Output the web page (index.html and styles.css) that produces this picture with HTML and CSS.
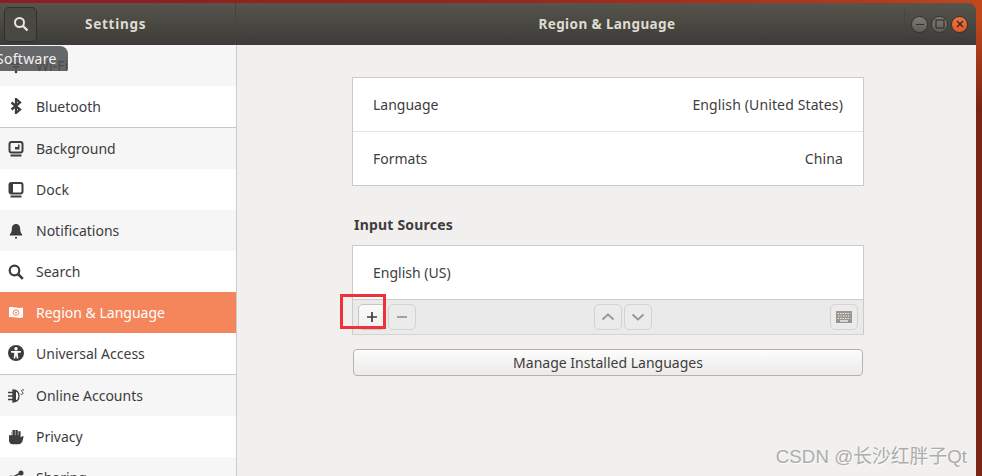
FILE: index.html
```html
<!DOCTYPE html>
<html>
<head>
  <meta charset="utf-8">
  <meta name="viewport" content="width=device-width, initial-scale=1">
  <title>Region &amp; Language</title>
  <link rel="stylesheet" href="styles.css">
</head>
<body>
  <div class="desktop">
    <div class="window">
      <header class="titlebar">
        <div class="titlebar-left">
          <button class="search-btn">
            <svg width="16" height="16" viewBox="0 0 16 16"><circle cx="6.5" cy="6.5" r="4.5" fill="none" stroke="#e8e6e0" stroke-width="2"/><path d="M10 10l4.5 4.5" stroke="#e8e6e0" stroke-width="2.4"/></svg>
          </button>
          <span class="app-title">Settings</span>
        </div>
        <div class="titlebar-main">
          <span class="page-title">Region &amp; Language</span>
          <div class="window-controls">
            <span class="win-btn"><svg width="10" height="10" viewBox="0 0 10 10"><path d="M1 5.5h8" stroke="#33322d" stroke-width="1.2"/></svg></span>
            <span class="win-btn"><svg width="10" height="10" viewBox="0 0 10 10"><rect x="1" y="1" width="8" height="8" fill="none" stroke="#33322d" stroke-width="1.2"/></svg></span>
            <span class="win-btn close"><svg width="10" height="10" viewBox="0 0 10 10"><path d="M2 2l6 6M8 2l-6 6" stroke="#33261f" stroke-width="1.4"/></svg></span>
          </div>
        </div>
      </header>
      <div class="content">
        <nav class="sidebar">
          <div class="nav-row alt">
            <svg class="nav-icon" viewBox="0 0 16 16"><path d="M3 6h10M5 9h6M7 11.500h2" stroke="#3d3d3d" stroke-width="1.600"/><circle cx="8" cy="14" r="1.300" fill="#3d3d3d"/></svg>
            <span>Wi-Fi</span>
          </div>
          <div class="nav-row section-end">
            <svg class="nav-icon" viewBox="0 0 16 16"><path d="M3.500 4.500l8.500 7L8 15V1l4 3.500-8.500 7" fill="none" stroke="#3d3d3d" stroke-width="2.300"/></svg>
            <span>Bluetooth</span>
          </div>
          <div class="nav-row alt">
            <svg class="nav-icon" viewBox="0 0 16 16"><rect x="1.500" y="1" width="13" height="10.500" rx="2" fill="none" stroke="#3d3d3d" stroke-width="2"/><path d="M7 8.500h4.500V3.500H10V6H7z" fill="#3d3d3d"/><rect x="2.500" y="13.500" width="11" height="2" fill="#3d3d3d"/></svg>
            <span>Background</span>
          </div>
          <div class="nav-row">
            <svg class="nav-icon" viewBox="0 0 16 16"><rect x="1.500" y="1" width="13" height="10.500" rx="2" fill="none" stroke="#3d3d3d" stroke-width="2"/><rect x="2" y="2" width="3" height="9" fill="#3d3d3d"/><rect x="2.500" y="13.500" width="11" height="2" fill="#3d3d3d"/></svg>
            <span>Dock</span>
          </div>
          <div class="nav-row alt">
            <svg class="nav-icon" viewBox="0 0 16 16"><path d="M8 1c-3 0-4.200 2.400-4.200 5.200 0 2.500-.8 4-2 5.300v1h12.400v-1c-1.200-1.300-2-2.800-2-5.300C12.200 3.400 11 1 8 1z" fill="#3d3d3d"/><rect x="7" y="14" width="2" height="1.500" fill="#3d3d3d"/></svg>
            <span>Notifications</span>
          </div>
          <div class="nav-row">
            <svg class="nav-icon" viewBox="0 0 16 16"><circle cx="6.500" cy="6.500" r="4.800" fill="none" stroke="#3d3d3d" stroke-width="2.200"/><path d="M10 10l4.800 4.800" stroke="#3d3d3d" stroke-width="2.600"/></svg>
            <span>Search</span>
          </div>
          <div class="nav-row selected">
            <svg class="nav-icon" viewBox="0 0 16 16"><path d="M1 2.500c4-1.500 9 1.500 14 0v10c-5 1.500-10-1.500-14 0z" fill="#fff"/><circle cx="8" cy="7.500" r="2.800" fill="none" stroke="#f5855a" stroke-width="1"/><circle cx="8" cy="7.500" r="1" fill="#f5855a"/></svg>
            <span>Region &amp; Language</span>
          </div>
          <div class="nav-row section-end">
            <svg class="nav-icon" viewBox="0 0 16 16"><circle cx="8" cy="8" r="8" fill="#3d3d3d"/><circle cx="8" cy="3.800" r="1.700" fill="#fff"/><path d="M3 6h10v1.400l-3.400.6.8 5.500H8.800L8 10l-.8 3.500H5.600l.8-5.500L3 7.400z" fill="#fff"/></svg>
            <span>Universal Access</span>
          </div>
          <div class="nav-row alt">
            <svg class="nav-icon" viewBox="0 0 16 16"><path d="M0 4.500h5M0 8h5M0 11.500h5" stroke="#3d3d3d" stroke-width="1.400"/><path d="M5 2c4 .3 6 2.800 6 6s-2 5.700-6 6z" fill="#fff" stroke="#3d3d3d" stroke-width="1.300"/><path d="M5 2.500h3V14H5z" fill="#3d3d3d"/><path d="M16 2.200c-1.500-1-2.800-.2-2.300 1L15 5c.4 1.100-1 2-2.500 1" fill="none" stroke="#3d3d3d" stroke-width=".9"/></svg>
            <span>Online Accounts</span>
          </div>
          <div class="nav-row">
            <svg class="nav-icon" viewBox="0 0 16 16"><path d="M1 6.200h2.500V2.800h.4v3.400h.6V1h2.400v5.200h.5V1h2.400v5.200h.5V2.300h2.300v6L15 7l.6.500-.8 3.500c-.5 2.500-2 4.300-4.300 4.300H4.800C2.600 15.300 1 13.800 1 11.500z" fill="#3d3d3d"/></svg>
            <span>Privacy</span>
          </div>
          <div class="nav-row alt">
            <svg class="nav-icon" viewBox="0 0 16 16"><circle cx="3" cy="8" r="2.500" fill="#3d3d3d"/><circle cx="13" cy="3" r="2.500" fill="#3d3d3d"/><circle cx="13" cy="13" r="2.500" fill="#3d3d3d"/><path d="M3 8l10-5M3 8l10 5" stroke="#3d3d3d" stroke-width="1.500"/></svg>
            <span>Sharing</span>
          </div>
        </nav>
        <main class="panel">
          <section class="frame">
            <div class="frame-row divided">
              <span>Language</span>
              <span class="value">English (United States)</span>
            </div>
            <div class="frame-row">
              <span>Formats</span>
              <span class="value">China</span>
            </div>
          </section>
          <h2 class="section-title">Input Sources</h2>
          <section class="frame input-frame">
            <div class="frame-row">
              <span>English (US)</span>
            </div>
            <div class="toolbar">
              <div class="tool-group">
                <button class="tool-btn active"><svg width="12" height="12" viewBox="0 0 12 12"><path d="M6 1v10M1 6h10" stroke="#3c3c3c" stroke-width="1.700"/></svg></button>
                <button class="tool-btn"><svg width="12" height="12" viewBox="0 0 12 12"><path d="M1 6h10" stroke="#99968f" stroke-width="1.700"/></svg></button>
              </div>
              <div class="tool-group">
                <button class="tool-btn"><svg width="14" height="14" viewBox="0 0 14 14"><path d="M1.500 9.500L7 4.500l5.500 5" fill="none" stroke="#99968f" stroke-width="1.800"/></svg></button>
                <button class="tool-btn"><svg width="14" height="14" viewBox="0 0 14 14"><path d="M1.500 4.500L7 9.500l5.500-5" fill="none" stroke="#99968f" stroke-width="1.800"/></svg></button>
              </div>
              <button class="tool-btn"><svg width="16" height="12" viewBox="0 0 16 12"><rect width="16" height="12" fill="#99968f"/><path d="M1.500 2.500h13M2 5h12M1.500 7.500h13" stroke="#eaeaea" stroke-width="1" stroke-dasharray="1.500 1"/><rect x="4" y="9.200" width="8" height="1.500" fill="#eaeaea"/></svg></button>
            </div>
          </section>
          <button class="manage-btn">Manage Installed Languages</button>
        </main>
      </div>
      <div class="tooltip"><span>Software</span></div>
      <div class="highlight"></div>
      <div class="watermark">CSDN @长沙红胖子Qt</div>
    </div>
  </div>
</body>
</html>
```

FILE: styles.css
```css
html, body {
  margin: 0;
  padding: 0;
  height: 100%;
  overflow: hidden;
}

body {
  font-family: "Noto Sans", "Noto Sans CJK SC", sans-serif;
  font-size: 14px;
  color: #3d3d3d;
}

button {
  font: inherit;
  color: inherit;
  padding: 0;
}

.desktop {
  height: 476px;
  padding: 3px 6px 0 0;
  box-sizing: border-box;
  background:
    linear-gradient(rgba(122, 36, 20, 0) 20px, #7a2414 110px) right top / 6px 100% no-repeat,
    linear-gradient(90deg, #8a1f22 0%, #96261e 50%, #b8391a 90%, #c2481c 100%);
  overflow: hidden;
}

.window {
  position: relative;
  height: 473px;
  display: flex;
  flex-direction: column;
  border-radius: 0 8px 0 0;
  overflow: hidden;
}

.titlebar {
  height: 42px;
  flex: none;
  display: flex;
  color: #dfdbd2;
  font-weight: 700;
  background: linear-gradient(#57544d, #3c3b37);
}

.titlebar-left {
  width: 236px;
  flex: none;
  display: flex;
  align-items: center;
  padding-left: 4px;
  box-sizing: border-box;
  border-right: 1px solid #44433e;
}

.search-btn {
  width: 33px;
  height: 35px;
  display: flex;
  align-items: center;
  justify-content: center;
  background: #4a4843;
  border: 1px solid #302f2b;
  border-radius: 5px;
}

.app-title {
  margin-left: 48px;
  font-size: 13.5px;
  letter-spacing: 0.75px;
}

.titlebar-main {
  flex: 1;
  position: relative;
  display: flex;
  align-items: center;
  justify-content: center;
  padding-left: 2px;
  font-size: 13.5px;
  letter-spacing: 0.4px;
}

.window-controls {
  position: absolute;
  right: 0;
  top: 7px;
  height: 28px;
  display: flex;
  align-items: center;
  gap: 3px;
  padding: 0 8px 0 6px;
  border-left: 1px solid #45443e;
}

.win-btn {
  width: 15px;
  height: 15px;
  display: flex;
  align-items: center;
  justify-content: center;
  border-radius: 50%;
  background: linear-gradient(#7b7a74, #5e5d57);
  border: 1px solid #34332e;
}

.win-btn.close {
  background: linear-gradient(#f2723f, #e05a2b);
}

.content {
  flex: 1;
  display: flex;
  min-height: 0;
}

.sidebar {
  width: 237px;
  flex: none;
  box-sizing: border-box;
  background: #fff;
  border-right: 1px solid #cfcdc9;
}

.nav-row {
  height: 41px;
  display: flex;
  align-items: center;
  padding-left: 8px;
  gap: 12px;
  background: #fff;
  box-sizing: border-box;
}

.nav-row.alt {
  background: #f6f6f6;
}

.nav-row.section-end {
  height: 42px;
  padding-bottom: 1px;
  border-bottom: 1px solid #c9c8c5;
}

.nav-row.selected {
  background: #f5855a;
  color: #fff;
}

.nav-icon {
  width: 16px;
  height: 16px;
  flex: none;
}

.panel {
  flex: 1;
  padding: 32px 112px 0 115px;
  background: #f1f0ee;
}

.frame {
  border: 1px solid #cdcbc7;
  background: #fff;
}

.frame-row {
  height: 53px;
  padding: 0 20px;
  display: flex;
  align-items: center;
  justify-content: space-between;
}

.frame-row .value {
  letter-spacing: 0.13px;
}

.frame-row.divided {
  border-bottom: 1px solid #e4e3e0;
}

.section-title {
  margin: 29px 0 10px 2px;
  height: 20px;
  line-height: 20px;
  font-size: 14px;
  font-weight: 700;
  letter-spacing: 0.2px;
}

.input-frame {
  border-bottom-color: #d6d4d0;
}

.toolbar {
  height: 35px;
  padding: 0 5px;
  display: flex;
  align-items: center;
  justify-content: space-between;
  background: #eaeaea;
  border-top: 1px solid #cdcbc7;
  box-sizing: border-box;
}

.tool-group {
  display: flex;
  gap: 2px;
}

.tool-btn {
  width: 28px;
  height: 26px;
  display: flex;
  align-items: center;
  justify-content: center;
  background: #ebebeb;
  border: 1px solid #d4d3cf;
  border-radius: 5px;
}

.tool-btn.active {
  background: linear-gradient(#fbfbfb, #eeeeec);
  border-color: #c8c6c2;
}

.manage-btn {
  display: block;
  width: 510px;
  height: 27px;
  margin: 14px 0 0 1px;
  background: linear-gradient(#fdfdfd, #ebeae8);
  border: 1px solid #b5b3af;
  border-radius: 4px;
}

.tooltip {
  position: absolute;
  left: 0;
  top: 43px;
  width: 68px;
  height: 25px;
  overflow: hidden;
  border-radius: 0 8px 2px 0;
  background: rgba(76, 78, 80, 0.85);
  color: #f2f2f0;
  line-height: 25px;
  white-space: nowrap;
  letter-spacing: 0.3px;
}

.tooltip span {
  margin-left: -4px;
}

.highlight {
  position: absolute;
  left: 340px;
  top: 291px;
  width: 40px;
  height: 29px;
  border: 3px solid #ee3239;
}

.watermark {
  position: absolute;
  right: 9px;
  bottom: 8px;
  font-family: "Liberation Sans", "Noto Sans CJK SC", sans-serif;
  font-size: 18.8px;
  color: #adadab;
  text-shadow: 1px 1px 0 #fbfbfb;
}
```
